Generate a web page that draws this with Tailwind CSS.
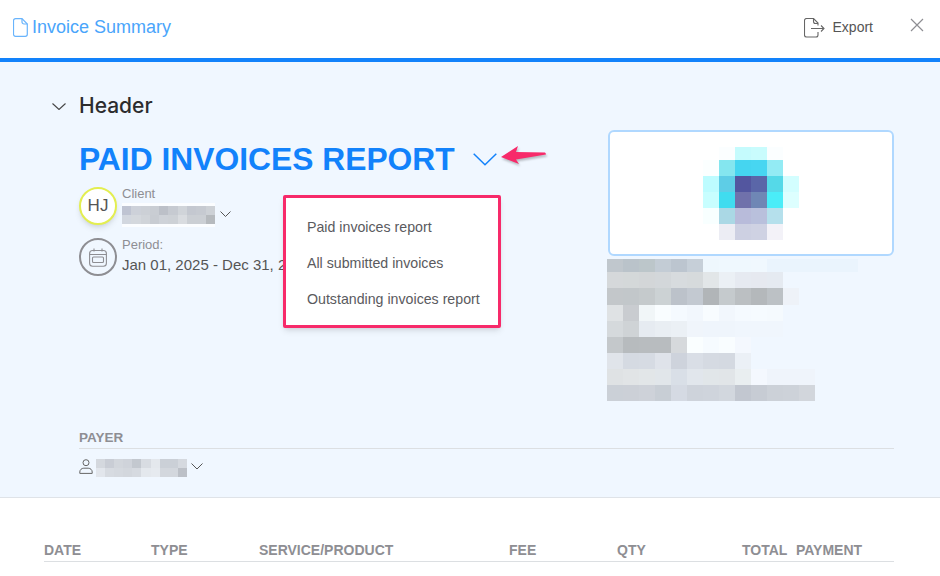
<!DOCTYPE html>
<html lang="en">
<head>
    <meta charset="UTF-8">
    <meta name="viewport" content="width=device-width, initial-scale=1.0">
    <title>Invoice Summary</title>
    <script src="https://cdn.jsdelivr.net/npm/@tailwindcss/browser@4"></script>
</head>
<body class="w-[940px] h-[576px] overflow-hidden bg-white font-['Liberation_Sans',Arial,sans-serif]">

    <!-- Top bar -->
    <div class="h-[62px] border-b-4 border-[#1282fb] flex items-center pl-[13px] pr-[16px] bg-white">
        <svg class="w-[15px] h-[19px] mr-[4px] mb-[3px]" viewBox="0 0 15 19" fill="none" stroke="#69b4fc" stroke-width="1.2"><path d="M2.5 .7h6.5l5.3 5.3v10.3a2 2 0 0 1-2 2h-9.800a2 2 0 0 1-2-2v-13.600a2 2 0 0 1 2-2z"/><path d="M9 .7v3.300a2 2 0 0 0 2 2h3.300"/></svg>
        <span class="text-[18px] text-[#4aa5fb] mb-[3px]">Invoice Summary</span>
        <div class="ml-auto flex items-center mb-[3px]">
            <svg class="w-[21px] h-[20px] mr-[8px]" viewBox="0 0 21 20" fill="none" stroke="#666" stroke-width="1.100"><path d="M14 7.500v-2.500l-4.500-4.500h-7a2 2 0 0 0-2 2v14.500a2 2 0 0 0 2 2h9.500a2 2 0 0 0 2-2v-3"/><path d="M9.500 .5v3a2 2 0 0 0 2 2h2.500"/><path d="M7 10.500h13M17 7.500l3 3-3 3"/></svg>
            <span class="text-[14px] text-[#555]">Export</span>
            <svg class="w-[14px] h-[14px] ml-[37px] mb-[6px]" viewBox="0 0 14 14" stroke="#8e8e93" stroke-width="1.200" fill="none"><path d="M1 1l12 12M13 1l-12 12"/></svg>
        </div>
    </div>

    <!-- Header section -->
    <div class="relative h-[436px] bg-[#f0f7ff] border-b border-[#dfe3e8] pl-[52px] pr-[46px] pt-[32px] flex flex-col">
        <div class="flex items-center h-[24px]">
            <svg class="w-[14px] h-[7px]" viewBox="0 0 14 7" fill="none" stroke="#444" stroke-width="1.100"><path d="M.5.5l6.500 6 6.500-6"/></svg>
            <span class="ml-[13px] text-[21px] font-medium text-[#2c2c2e] font-['Inter',sans-serif]">Header</span>
        </div>

        <div class="flex justify-between pl-[27px] mt-[12px]">
            <div>
                <div class="flex items-center mt-[11px]">
                    <span class="text-[31.8px] leading-[36px] font-bold text-[#1282fb]">PAID INVOICES REPORT</span>
                    <svg class="w-[24px] h-[13px] ml-[18px] mt-[1px]" viewBox="0 0 24 13" fill="none" stroke="#1282fb" stroke-width="1.500"><path d="M.7.7l11.300 11 11.300-11"/></svg>
                </div>

                <div class="flex mt-[10px]">
                    <div class="w-[38px] h-[38px] rounded-full border-2 border-[#e3ee50] bg-white shadow-md flex items-center justify-center text-[17px] text-[#555]">HJ</div>
                    <div class="ml-[5px]">
                        <div class="text-[13px] leading-[14px] text-[#8e8e93]">Client</div>
                        <div class="flex items-center mt-[2px]">
                            <div class="grid grid-cols-[repeat(10,9.3px)] grid-rows-[9px_9px] py-[3px] bg-white/70">
                                <i class="bg-[#bfc4d2]"></i><i class="bg-[#cdd1d9]"></i><i class="bg-[#ccd0d6]"></i><i class="bg-[#c9cdd3]"></i><i class="bg-[#bcc0c8]"></i><i class="bg-[#c6cad1]"></i><i class="bg-[#d0d4d9]"></i><i class="bg-[#c4c8d0]"></i><i class="bg-[#c6cad1]"></i><i class="bg-[#cdd1d6]"></i>
                                <i class="bg-[#d2d7df]"></i><i class="bg-[#d4d8dd]"></i><i class="bg-[#d0d4d9]"></i><i class="bg-[#c8ccd2]"></i><i class="bg-[#ced2d8]"></i><i class="bg-[#cdd1d6]"></i><i class="bg-[#d9dce0]"></i><i class="bg-[#cbcfd4]"></i><i class="bg-[#cbcfd4]"></i><i class="bg-[#b6babe]"></i>
                            </div>
                            <svg class="w-[11px] h-[6px] ml-[5px] mb-[3px]" viewBox="0 0 11 6" fill="none" stroke="#555"><path d="M.5.5l5 5 5-5"/></svg>
                        </div>
                    </div>
                </div>

                <div class="flex mt-[11px]">
                    <div class="w-[38px] h-[38px] rounded-full border-2 border-[#8e8e93] flex items-center justify-center">
                        <svg class="w-[18px] h-[19px]" viewBox="0 0 18 19" fill="none" stroke="#8e8e93" stroke-width="1.100"><rect x=".6" y="2.500" width="16.800" height="15.800" rx="3"/><path d="M.6 6.500h16.800M5 .5v3M13 .5v3"/><rect x="3.500" y="9" width="11" height="5.500" rx="1"/></svg>
                    </div>
                    <div class="ml-[5px]">
                        <div class="text-[13px] leading-[14px] text-[#8e8e93]">Period:</div>
                        <div class="text-[15px] leading-[18px] mt-[4px] text-[#555]">Jan 01, 2025 - Dec 31, 2025</div>
                    </div>
                </div>
            </div>

            <div class="w-[286px]">
                <div class="h-[126px] bg-white border-2 border-[#b0d8ff] rounded-[6px] flex justify-center pt-[15px] pr-[1px]">
                    <div class="grid grid-cols-[repeat(6,16px)] grid-rows-[13px_repeat(5,16px)]">
                        <i class="bg-white"></i><i class="bg-[#fbfeff]"></i><i class="bg-[#c5fbfd]"></i><i class="bg-[#c9fcfd]"></i><i class="bg-[#fbfeff]"></i><i class="bg-white"></i>
                        <i class="bg-[#fbffff]"></i><i class="bg-[#84e6ef]"></i><i class="bg-[#45d5f0]"></i><i class="bg-[#47d6f1]"></i><i class="bg-[#93ebf4]"></i><i class="bg-white"></i>
                        <i class="bg-[#bdfcff]"></i><i class="bg-[#5ecde6]"></i><i class="bg-[#53569f]"></i><i class="bg-[#5a66a8]"></i><i class="bg-[#55d9e8]"></i><i class="bg-[#d3feff]"></i>
                        <i class="bg-[#c8feff]"></i><i class="bg-[#40dcef]"></i><i class="bg-[#7071ab]"></i><i class="bg-[#6f87b5]"></i><i class="bg-[#4aedf8]"></i><i class="bg-[#ddffff]"></i>
                        <i class="bg-[#f8ffff]"></i><i class="bg-[#aad8e5]"></i><i class="bg-[#b8bbda]"></i><i class="bg-[#b9c0dc]"></i><i class="bg-[#b5e0ec]"></i><i class="bg-white"></i>
                        <i class="bg-white"></i><i class="bg-[#ecedf4]"></i><i class="bg-[#cdd0e2]"></i><i class="bg-[#cfd2e3]"></i><i class="bg-[#f3f2f8]"></i><i class="bg-white"></i>
                    </div>
                </div>
                <!-- Blurred company details -->
                <div class="grid grid-cols-[repeat(15,16px)_11px] grid-rows-[13px_16px_17px_repeat(6,16px)] ml-[-1px] mt-[3px]">
                    <i class="bg-[#c0c7cd]"></i><i class="bg-[#bac3ca]"></i><i class="bg-[#bcc6ca]"></i><i class="bg-[#c3ccd5]"></i><i class="bg-[#bcc5cf]"></i><i class="bg-[#c6cfd8]"></i><i class="bg-[#eef7fd]"></i><i class="bg-[#eff8fe]"></i><i class="bg-[#eff8fe]"></i><i class="bg-[#f0f8fe]"></i><i class="bg-[#eaf4fd]"></i><i class="bg-[#eaf4fd]"></i><i class="bg-[#eaf4fd]"></i><i class="bg-[#eaf4fd]"></i><i class="bg-[#eaf4fd]"></i><i class="bg-[#eaf4fd]"></i>
                    <i class="bg-[#d5d8da]"></i><i class="bg-[#d4d8d9]"></i><i class="bg-[#d3d6d8]"></i><i class="bg-[#d3d7da]"></i><i class="bg-[#d7dbde]"></i><i class="bg-[#d6dadc]"></i><i class="bg-[#e2e6e8]"></i><i class="bg-[#ebf0f5]"></i><i class="bg-[#e6eaf1]"></i><i class="bg-[#e6e9f0]"></i><i class="bg-[#e5eaf1]"></i><i></i><i></i><i></i><i></i><i></i>
                    <i class="bg-[#c3c7ca]"></i><i class="bg-[#c2c7ca]"></i><i class="bg-[#c5cacc]"></i><i class="bg-[#ccd2d4]"></i><i class="bg-[#bcc2ca]"></i><i class="bg-[#c3c9d1]"></i><i class="bg-[#b1b5b8]"></i><i class="bg-[#c5cacd]"></i><i class="bg-[#bbbfc2]"></i><i class="bg-[#b4b8bb]"></i><i class="bg-[#bcc1c5]"></i><i class="bg-[#eef2f8]"></i><i></i><i></i><i></i><i></i>
                    <i class="bg-[#dfe2e4]"></i><i class="bg-[#c9ccd0]"></i><i class="bg-[#f1f6f8]"></i><i class="bg-[#f9fdff]"></i><i class="bg-[#f5faff]"></i><i class="bg-[#f2f7fd]"></i><i class="bg-[#f8fcff]"></i><i class="bg-[#f2f7fd]"></i><i class="bg-[#f5faff]"></i><i class="bg-[#f6fbff]"></i><i class="bg-[#f5fafe]"></i><i></i><i></i><i></i><i></i><i></i>
                    <i class="bg-[#d5d9dc]"></i><i class="bg-[#cfd3d6]"></i><i class="bg-[#e6ebf1]"></i><i class="bg-[#e9eef3]"></i><i class="bg-[#ebf0f5]"></i><i class="bg-[#f0f5fb]"></i><i class="bg-[#eff5fc]"></i><i class="bg-[#eff5fc]"></i><i class="bg-[#f0f6fd]"></i><i class="bg-[#f0f6fd]"></i><i class="bg-[#f0f6fd]"></i><i></i><i></i><i></i><i></i><i></i>
                    <i class="bg-[#c4c8cb]"></i><i class="bg-[#b7bbbe]"></i><i class="bg-[#b8bcbf]"></i><i class="bg-[#b8bcbf]"></i><i class="bg-[#d6d9dc]"></i><i class="bg-[#fafeff]"></i><i class="bg-[#f6fbff]"></i><i class="bg-[#f9fdff]"></i><i class="bg-[#f4f8fe]"></i><i></i><i></i><i></i><i></i><i></i><i></i><i></i>
                    <i class="bg-[#e0e4ea]"></i><i class="bg-[#d5dae2]"></i><i class="bg-[#d6dbe3]"></i><i class="bg-[#dfe3ea]"></i><i class="bg-[#ced3dc]"></i><i class="bg-[#d9dee6]"></i><i class="bg-[#d5dae2]"></i><i class="bg-[#d4d9e1]"></i><i class="bg-[#ebf0f6]"></i><i></i><i></i><i></i><i></i><i></i><i></i><i></i>
                    <i class="bg-[#dfe2e4]"></i><i class="bg-[#e1e4e6]"></i><i class="bg-[#e2e6e8]"></i><i class="bg-[#e1e6ea]"></i><i class="bg-[#d9dfe7]"></i><i class="bg-[#e1e6ec]"></i><i class="bg-[#e1e6e9]"></i><i class="bg-[#e1e5e8]"></i><i class="bg-[#e9eef0]"></i><i class="bg-[#f4f8fe]"></i><i class="bg-[#eff4fb]"></i><i class="bg-[#eff4fb]"></i><i class="bg-[#eff4fb]"></i><i></i><i></i><i></i>
                    <i class="bg-[#cbd0d7]"></i><i class="bg-[#ccd0d7]"></i><i class="bg-[#ced2d9]"></i><i class="bg-[#c8ced5]"></i><i class="bg-[#d5dae3]"></i><i class="bg-[#ced3db]"></i><i class="bg-[#cfd4dc]"></i><i class="bg-[#d2d7de]"></i><i class="bg-[#c2c7d0]"></i><i class="bg-[#c7ccd4]"></i><i class="bg-[#ccd1d8]"></i><i class="bg-[#cdd2d9]"></i><i class="bg-[#d2d6dc]"></i><i></i><i></i><i></i>
                </div>
            </div>
        </div>

        <!-- Payer -->
        <div class="ml-[27px] mt-auto mb-[20px]">
            <div class="text-[13.5px] leading-[16px] font-bold text-[#8e8e93] pb-[2px] border-b border-[#dcdfe2]">PAYER</div>
            <div class="flex items-center mt-[10px]">
                <svg class="w-[14px] h-[15px] mb-[3px]" viewBox="0 0 14 15" fill="none" stroke="#666" stroke-width="1"><circle cx="7" cy="3.700" r="3"/><path d="M.8 14.400v-1.400c0-2.200 1.800-3.800 4-3.800h4.400c2.200 0 4 1.600 4 3.800v1.400z"/></svg>
                <div class="grid grid-cols-[repeat(10,9.1px)] grid-rows-[9px_9px] ml-[3px] bg-white/70">
                    <i class="bg-[#d4d8de]"></i><i class="bg-[#c9cdd5]"></i><i class="bg-[#d2d6dc]"></i><i class="bg-[#cfd3da]"></i><i class="bg-[#c3c8cf]"></i><i class="bg-[#d8dce2]"></i><i class="bg-[#e4e8ed]"></i><i class="bg-[#cbd0d7]"></i><i class="bg-[#cbd0d7]"></i><i class="bg-[#d5d9df]"></i>
                    <i class="bg-[#e2e6ec]"></i><i class="bg-[#d7dbe1]"></i><i class="bg-[#d5d9df]"></i><i class="bg-[#d3d7dd]"></i><i class="bg-[#d6dae0]"></i><i class="bg-[#e4e8ed]"></i><i class="bg-[#e6eaef]"></i><i class="bg-[#d3d7dd]"></i><i class="bg-[#d3d7dd]"></i><i class="bg-[#bcc0c7]"></i>
                </div>
                <svg class="w-[12px] h-[7px] ml-[4px] mb-[3px]" viewBox="0 0 12 7" fill="none" stroke="#555"><path d="M.5.5l5.500 5.500 5.500-5.500"/></svg>
            </div>
        </div>

        <!-- Dropdown menu, highlighted -->
        <div class="absolute left-[283px] top-[133px] w-[218px] h-[133px] bg-white border-[3px] border-[#f72a6a] rounded-[2px] shadow-md pl-[21px] pt-[11px] text-[14.2px] leading-[36px] text-[#5a5a5e]">
            <div>Paid invoices report</div>
            <div>All submitted invoices</div>
            <div>Outstanding invoices report</div>
        </div>

        <!-- Annotation arrow -->
        <svg class="absolute left-[500px] top-[82px] w-[48px] h-[22px] drop-shadow-[1px_2px_1px_rgba(0,0,0,0.25)]" viewBox="0 0 48 22" fill="#f72a6a"><path d="M1 13l17-11-2 6 29 .5q1 1 1 2l-30 5 3 4.500z"/></svg>
    </div>

    <!-- Table head -->
    <div class="ml-[44px] mr-[46px] mt-[44px] flex text-[14px] leading-[17px] font-bold text-[#8e8e93] pb-[2px] border-b border-[#dcdfe2]">
        <div class="w-[107px]">DATE</div>
        <div class="w-[108px]">TYPE</div>
        <div class="w-[250px]">SERVICE/PRODUCT</div>
        <div class="w-[108px]">FEE</div>
        <div class="w-[125px]">QTY</div>
        <div class="w-[54px]">TOTAL</div>
        <div>PAYMENT</div>
    </div>

</body>
</html>
